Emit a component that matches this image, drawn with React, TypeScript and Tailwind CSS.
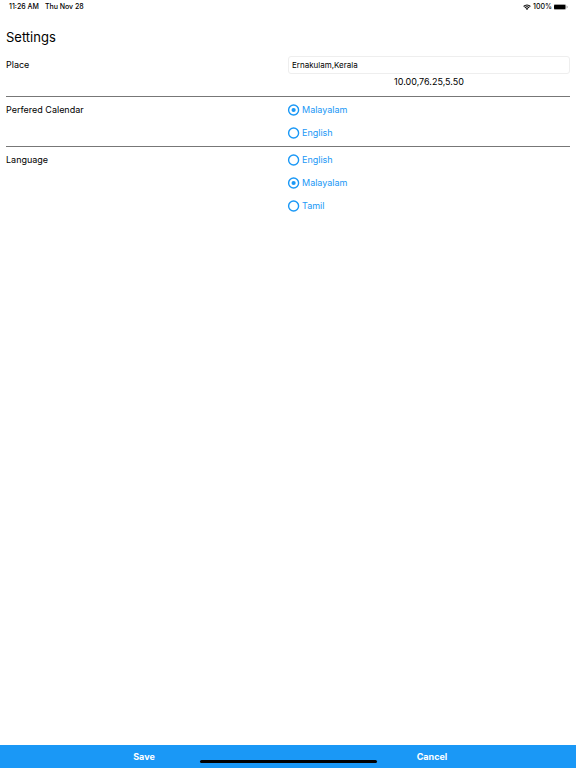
import { useState } from "react";

type RadioGroupProps = {
  name: string;
  label: string;
  options: string[];
  initial: string;
};

function RadioGroup({ name, label, options, initial }: RadioGroupProps) {
  const [value, setValue] = useState(initial);
  return (
    <div role="radiogroup" aria-labelledby={name + "-label"} className="grid grid-cols-2 py-[2px]">
      <span id={name + "-label"} className="h-[22px] leading-[22px]">
        {label}
      </span>
      <div className="flex flex-col items-start gap-px">
        {options.map((option) => (
          <label key={option} className="flex h-[22px] items-center gap-[2px] text-[#1a98f6]">
            <input
              type="radio"
              name={name}
              value={option}
              checked={value === option}
              onChange={() => setValue(option)}
              className="peer sr-only"
            />
            <svg
              viewBox="0 0 12 12"
              className="size-3 shrink-0 overflow-visible peer-focus-visible:outline"
              aria-hidden="true"
            >
              <circle cx="5.6" cy="6" r="5" fill="none" stroke="currentColor" strokeWidth="1.4" />
              {value === option && <circle cx="5.6" cy="6" r="2.1" fill="currentColor" />}
            </svg>
            {option}
          </label>
        ))}
      </div>
    </div>
  );
}

function StatusBar() {
  return (
    <header className="flex h-[14px] items-center justify-between pr-2 pl-[9px] text-[7px] leading-[14px] font-medium">
      <div className="flex gap-[6px]">
        <span>11:26 AM</span>
        <span>Thu Nov 28</span>
      </div>
      <div className="flex items-center gap-[2px]">
        <svg viewBox="0 0 16 12" className="h-[6px] w-2" aria-hidden="true">
          <path d="M0.5 4.2a10.8 10.8 0 0 1 15 0L14 5.8a8.6 8.6 0 0 0-12 0Z" />
          <path d="M3 6.8a7.2 7.2 0 0 1 10 0l-1.5 1.6a5 5 0 0 0-7 0Z" />
          <path d="M5.5 9.4a3.6 3.6 0 0 1 5 0L8 12Z" />
        </svg>
        <span>100%</span>
        <svg viewBox="0 0 28 12" className="h-[6px] w-[14px]" aria-hidden="true">
          <rect x="-1" y="0.5" width="25" height="11" rx="3" fill="none" stroke="#999" />
          <rect x="0" y="1.5" width="23" height="9" rx="2" />
          <path d="M25.5 4v4a2 2 0 0 0 0-4Z" fill="#999" />
        </svg>
      </div>
    </header>
  );
}

export default function App() {
  const [place, setPlace] = useState("Ernakulam,Kerala");
  return (
    <div className="relative flex min-h-screen flex-col bg-white font-['Inter','Liberation_Sans',sans-serif] text-[9px] text-black">
      <StatusBar />
      <main className="flex-1 px-[6px] pt-[13px]">
        <h1 className="text-[13px] leading-5">Settings</h1>
        <div className="grid grid-cols-2 pt-[9px] pb-1">
          <label htmlFor="place" className="h-[18px] leading-[18px]">
            Place
          </label>
          <div>
            <input
              id="place"
              type="text"
              value={place}
              onChange={(event) => setPlace(event.target.value)}
              className="block h-[18px] w-full rounded-[3px] border border-[#eee] bg-white px-[3px] text-[8px] outline-none"
            />
            <p className="h-[18px] text-center leading-4">10.00,76.25,5.50</p>
          </div>
        </div>
        <hr className="border-[#777]" />
        <RadioGroup
          name="calendar"
          label="Perfered Calendar"
          options={["Malayalam", "English"]}
          initial="Malayalam"
        />
        <hr className="border-[#777]" />
        <RadioGroup
          name="language"
          label="Language"
          options={["English", "Malayalam", "Tamil"]}
          initial="Malayalam"
        />
      </main>
      <footer className="grid h-[23px] grid-cols-2 bg-[#1a98f6] font-bold text-white">
        <button type="button">Save</button>
        <button type="button">Cancel</button>
      </footer>
      <div className="pointer-events-none absolute inset-x-0 bottom-[5px] flex justify-center">
        <div className="h-[3px] w-[177px] rounded-full bg-black" />
      </div>
    </div>
  );
}
